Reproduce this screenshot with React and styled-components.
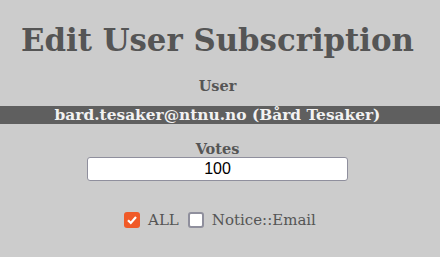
import React from 'react';
import styled, { createGlobalStyle } from 'styled-components';

const GlobalStyle = createGlobalStyle`
  html, body {
    margin: 0;
    padding: 0;
    background-color: #cccccc;
  }
  body {
    font-family: 'DejaVu Serif', serif;
    color: #555555;
  }
`;

const Page = styled.div`
  display: flex;
  flex-direction: column;
  align-items: center;
  width: 440px;
  height: 257px;
  padding: 22px 5px 0 0;
  box-sizing: border-box;
`;

const Title = styled.h1`
  font-size: 30.8px;
  font-weight: bold;
  line-height: 36px;
  margin: 0 0 20px;
  color: #555555;
`;

const Label = styled.div`
  font-size: 14.5px;
  font-weight: bold;
  line-height: 16px;
  color: #555555;
  margin-bottom: ${props => props.gap || 0}px;
`;

const UserBar = styled.div`
  align-self: stretch;
  height: 18px;
  line-height: 18px;
  margin: 0 -5px 17px 0;
  padding-right: 5px;
  background-color: #5f5f5f;
  color: #f2f2f2;
  font-size: 15.4px;
  font-weight: bold;
  text-align: center;
`;

const VotesInput = styled.input`
  width: 261px;
  height: 24px;
  box-sizing: border-box;
  margin: 0;
  border: 1px solid #8f8f9d;
  border-radius: 3px;
  background: white;
  font-family: 'Liberation Sans', Arial, sans-serif;
  font-size: 16px;
  color: black;
  text-align: center;
  padding: 0;
  outline: none;
`;

const Options = styled.div`
  display: flex;
  align-items: center;
  margin: 30px 0 0 5px;
`;

const Option = styled.label`
  display: flex;
  align-items: center;
  font-size: 15px;
  color: #555555;
  margin-right: ${props => props.gap || 0}px;
`;

const Box = styled.span`
  display: inline-flex;
  align-items: center;
  justify-content: center;
  width: 16px;
  height: 16px;
  box-sizing: border-box;
  border-radius: 3px;
  margin-right: 8px;
  background-color: ${props => (props.checked ? '#f05a28' : '#ffffff')};
  border: ${props => (props.checked ? 'none' : '2px solid #8f8f9d')};
`;

function Checkbox({ checked }) {
  return (
    <Box checked={checked}>
      {checked && (
        <svg width="12" height="12" viewBox="0 0 12 12">
          <path d="M2 6.2 L4.8 9 L10 3" fill="none" stroke="white" strokeWidth="2.2" />
        </svg>
      )}
    </Box>
  );
}

export default function App() {
  return (
    <>
      <GlobalStyle />
      <Page>
        <Title>Edit User Subscription</Title>
        <Label gap={12}>User</Label>
        <UserBar>bard.tesaker@ntnu.no (Bård Tesaker)</UserBar>
        <Label>Votes</Label>
        <VotesInput defaultValue="100" />
        <Options>
          <Option gap={9}>
            <Checkbox checked />
            ALL
          </Option>
          <Option>
            <Checkbox />
            Notice::Email
          </Option>
        </Options>
      </Page>
    </>
  );
}
